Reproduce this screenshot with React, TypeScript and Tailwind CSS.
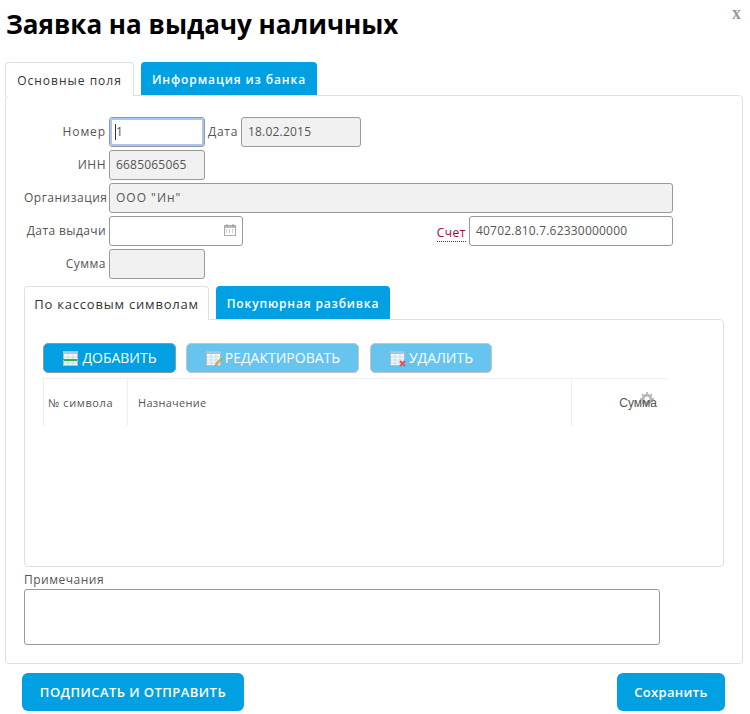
import React from "react";

const F = "[font-family:'Open_Sans',sans-serif]";

function Label({ w, tight, children }: { w: string; tight?: boolean; children: React.ReactNode }) {
  return <div className={`${w} shrink-0 text-right text-[12px] text-[#555] ${tight ? "tracking-[0.4px]" : "tracking-[0.5px]"} pr-[3px]`}>{children}</div>;
}

function Field({ w, value, off, wide, children }: { w: string; value?: string; off?: boolean; wide?: boolean; children?: React.ReactNode }) {
  return (
    <div className={`${w} h-[30px] shrink-0 flex items-center justify-between rounded-[3px] border border-[#999] pl-[6px] pr-[6px] text-[12px] text-[#555] ${wide ? "tracking-[1px]" : "tracking-[0.2px]"} ${off ? "bg-[#f1f1f1]" : "bg-white"}`}>
      <span>{value}</span>
      {children}
    </div>
  );
}

function GridIcon({ kind }: { kind: "add" | "edit" | "del" }) {
  return (
    <svg width="17" height="17" viewBox="0 0 17 17" className="shrink-0">
      <rect x="1.5" y="1.5" width="14" height="14" fill="#f4f8fb" stroke="#b4bdc3" />
      <rect x="2" y="2" width="13" height="2" fill="#a4c8e6" />
      <path d="M2 7h13M2 10h13M2 13h13M6 4v11M11 4v11" stroke="#c5dcef" strokeWidth="1" />
      {kind === "add" && <rect x="2" y="9" width="13" height="2" fill="#3fae3f" />}
      {kind === "add" && <rect x="0" y="9" width="2" height="1" fill="#3fae3f" />}
      {kind === "edit" && <path d="M10 16l1-3 5-5 1 1-5 6z" fill="#e8b94a" stroke="#a8863a" strokeWidth="0.6" />}
      {kind === "del" && <path d="M11 11l5 5M16 11l-5 5" stroke="#d9585f" strokeWidth="2.2" />}
    </svg>
  );
}

function ActionButton({ w, dim, icon, children }: { w: string; dim?: boolean; icon: "add" | "edit" | "del"; children: React.ReactNode }) {
  return (
    <div className={`${w} h-[30px] flex items-center justify-center gap-[3px] rounded-[5px] border text-[14px] leading-[24px] font-medium text-white ${dim ? "bg-[#66c4ef] border-[#c4c4c4]" : "bg-[#00a0e3] border-[#8a9aa5]"}`}>
      <GridIcon kind={icon} />
      <span className="-mt-[1px]">{children}</span>
    </div>
  );
}

export default function App() {
  return (
    <div className={`${F} relative w-[750px] h-[714px] bg-white overflow-hidden`}>
      <span className="absolute right-[9px] top-[1px] text-[18px] leading-[24px] font-bold text-[#999] [font-family:'Liberation_Serif',serif]">x</span>
      <h1 className="h-[62px] pl-[6px] pt-[5px] text-[26px] leading-[38px] font-bold text-black">Заявка на выдачу наличных</h1>

      <div className="flex items-end h-[34px] pl-[5px] gap-[7px] relative z-10">
        <div className="w-[129px] h-[34px] pt-[2px] flex items-center justify-center bg-white border border-b-0 border-[#e0e0e0] rounded-t-[4px] text-[12px] text-[#333] tracking-[1px]">Основные поля</div>
        <div className="w-[176px] h-[33px] mb-[1px] pt-[3px] flex items-center justify-center bg-[#00a0e3] rounded-t-[4px] text-[12px] font-semibold text-white tracking-[0.9px]">Информация из банка</div>
      </div>

      <div className="-mt-[1px] ml-[5px] w-[738px] h-[569px] border border-[#e0e0e0] rounded-[4px] pt-[21px] pl-[18px]">
        <div className="flex flex-col gap-[3px]">
          <div className="flex items-center">
            <Label w="w-[85px]">
              <span className="tracking-[0.9px]">Номер</span>
            </Label>
            <div className="relative">
              <Field w="w-[96px]" value="1" />
              <div className="absolute inset-[1px] rounded-[2px] border-2 border-[#a9c4f5] pointer-events-none" />
              <div className="absolute left-[6px] top-[7px] w-px h-[16px] bg-[#333]" />
            </div>
            <div className="w-[36px] shrink-0 text-right text-[12px] text-[#555] tracking-[0.7px] pr-[3px]">Дата</div>
            <Field w="w-[120px]" value="18.02.2015" off />
          </div>
          <div className="flex items-center">
            <Label w="w-[85px]">ИНН</Label>
            <Field w="w-[96px]" value="6685065065" off />
          </div>
          <div className="flex items-center">
            <Label w="w-[85px]">Организация</Label>
            <Field w="w-[564px]" value={'ООО "Ин"'} off wide />
          </div>
          <div className="flex items-center">
            <Label w="w-[85px]" tight>Дата выдачи</Label>
            <Field w="w-[134px]">
              <svg width="12" height="12" viewBox="0 0 12 12" className="-mt-[2px]">
                <rect x="0.5" y="1.5" width="11" height="10" fill="#fff" stroke="#aaa" />
                <rect x="1" y="2" width="10" height="2" fill="#bbb" />
                <path d="M3 0v3M9 0v3" stroke="#999" />
                <path d="M2 6h1M5 6h1M8 6h1M2 8h1M5 8h1M8 8h1" stroke="#999" />
              </svg>
            </Field>
            <div className="w-[226px] shrink-0 text-right pr-[3px]">
              <span className="text-[12px] text-[#a8003c] tracking-[0.5px] border-b border-dotted border-[#0040b0]">Счет</span>
            </div>
            <Field w="w-[204px]" value="40702.810.7.62330000000" />
          </div>
          <div className="flex items-center">
            <Label w="w-[85px]">Сумма</Label>
            <Field w="w-[96px]" off />
          </div>
        </div>

        <div className="flex items-end h-[34px] mt-[7px] gap-[7px] relative z-10">
          <div className="w-[185px] h-[34px] pt-[2px] flex items-center justify-center bg-white border border-b-0 border-[#e0e0e0] rounded-t-[4px] text-[13px] text-[#333] tracking-[0.8px]">По кассовым символам</div>
          <div className="w-[174px] h-[33px] mb-[1px] pt-[3px] flex items-center justify-center bg-[#00a0e3] rounded-t-[4px] text-[12px] font-semibold text-white tracking-[0.85px]">Покупюрная разбивка</div>
        </div>

        <div className="-mt-[1px] w-[700px] h-[248px] border border-[#e0e0e0] rounded-b-[4px] rounded-tr-[4px] pt-[23px] pl-[18px]">
          <div className="flex">
            <ActionButton w="w-[133px]" icon="add">ДОБАВИТЬ</ActionButton>
            <div className="w-[10px]" />
            <ActionButton w="w-[173px]" dim icon="edit">РЕДАКТИРОВАТЬ</ActionButton>
            <div className="w-[11px]" />
            <ActionButton w="w-[122px]" dim icon="del">УДАЛИТЬ</ActionButton>
          </div>
          <div className="mt-[5px] w-[624px] h-[48px] border-t border-[#eee] flex text-[11px] text-[#555]">
            <div className="w-[85px] shrink-0 border-l border-r border-[#eee] pl-[4px] pt-[1px] flex items-center tracking-[0.6px]">№ символа</div>
            <div className="flex-1 border-r border-[#eee] pl-[10px] pt-[1px] flex items-center tracking-[0.3px]">Назначение</div>
            <div className="w-[95px] shrink-0 relative flex items-center justify-end pr-[10px] text-[12px] text-[#555] [font-family:'Liberation_Sans',sans-serif]">
              <svg width="14" height="14" viewBox="0 0 16 16" className="absolute right-[13px] top-[13px]">
                <circle cx="8" cy="8" r="4.5" fill="none" stroke="#b5b5b5" strokeWidth="3" />
                <path d="M8 0v3M8 13v3M0 8h3M13 8h3M2.3 2.3l2 2M11.7 11.7l2 2M13.7 2.3l-2 2M4.3 11.7l-2 2" stroke="#b5b5b5" strokeWidth="2" />
              </svg>
              <span className="relative">Сумма</span>
            </div>
          </div>
        </div>

        <div className="h-[22px] leading-[25px] text-[12px] text-[#555] tracking-[0.5px] font-medium">Примечания</div>
        <div className="w-[636px] h-[56px] rounded-[3px] border border-[#999] bg-white" />
      </div>

      <div className="flex justify-between pl-[22px] pr-[25px] mt-[9px]">
        <div className="w-[222px] h-[38px] pt-[1px] flex items-center justify-center rounded-[6px] bg-[#00a0e3] text-[13px] font-semibold tracking-[0.45px] text-white">ПОДПИСАТЬ И ОТПРАВИТЬ</div>
        <div className="w-[108px] h-[38px] pt-[1px] flex items-center justify-center rounded-[6px] bg-[#00a0e3] text-[13px] font-semibold tracking-[0.3px] text-white">Сохранить</div>
      </div>
    </div>
  );
}
